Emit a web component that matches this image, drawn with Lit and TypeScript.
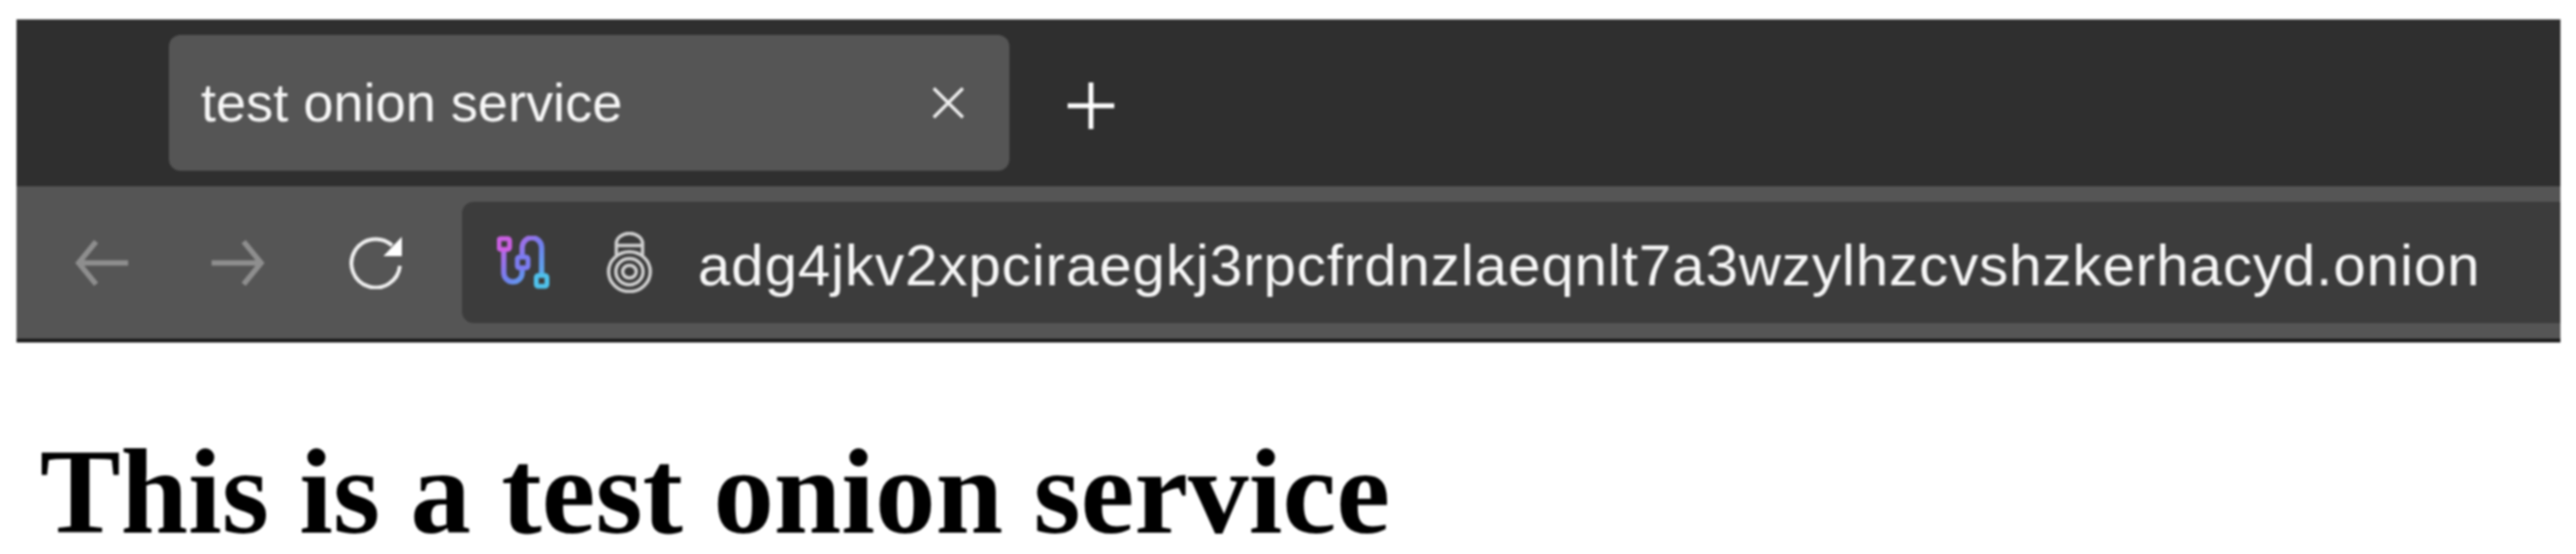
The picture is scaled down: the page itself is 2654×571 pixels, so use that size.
import { LitElement, html, css } from "lit";
import { customElement } from "lit/decorators.js";

@customElement("app-root")
export class AppRoot extends LitElement {
  static styles = css`
    :host { display: block; background: #fff; font-family: "Liberation Sans", Arial, sans-serif; }
    .frame { filter: blur(0.8px); padding: 20px 16px 0 17px; }
    .titlebar { height: 172px; box-sizing: border-box; background: #2f2f2f; padding: 16px 0 0 157px; display: flex; gap: 60px; align-items: flex-start; }
    .tab { width: 866px; height: 140px; box-sizing: border-box; background: #555; border-radius: 12px; display: flex; align-items: center; justify-content: space-between; padding: 0 47px 0 33px; color: #f6f6f6; font-size: 55.8px; }
    .tab span { margin-bottom: 2px; }
    .tab svg { flex: none; }
    .plus { margin-top: 49px; flex: none; }
    .toolbar { height: 157px; box-sizing: border-box; background: #555; display: flex; align-items: center; padding-left: 60px; }
    .nav { flex: none; }
    .fwd { margin-left: 86px; }
    .reload { margin-left: 85px; }
    .address { margin-left: 62px; flex: 1; height: 125px; background: #3c3c3c; border-radius: 12px 0 0 12px; display: flex; align-items: center; padding-left: 36px; color: #f6f6f6; font-size: 60px; letter-spacing: 0.95px; white-space: nowrap; }
    .lock { margin-left: 58px; flex: none; }
    .url { margin-left: 47px; margin-top: 5px; }
    .edge { height: 4px; background: #1c1c1c; }
    h1 { margin: 92px 0 0 24px; font-family: "Liberation Serif", "Times New Roman", serif; font-weight: 700; font-size: 124.9px; line-height: 124px; color: #000; white-space: nowrap; }
  `;

  render() {
    return html`
      <div class="frame">
        <div class="titlebar">
          <div class="tab">
            <span>test onion service</span>
            <svg width="32" height="32" viewBox="0 0 32 32" fill="none" stroke="#eee" stroke-width="3.4"><path d="M1 1 31 31M31 1 1 31"/></svg>
          </div>
          <svg class="plus" width="48" height="48" viewBox="0 0 48 48" fill="none" stroke="#fff" stroke-width="5"><path d="M0 24H48M24 0V48"/></svg>
        </div>
        <div class="toolbar">
          <svg class="nav" width="55" height="48" viewBox="0 0 55 48" fill="none" stroke="#8e8e8e" stroke-width="5.5"><path d="M55 24H4M22 2 4 24 22 46"/></svg>
          <svg class="nav fwd" width="55" height="48" viewBox="0 0 55 48" fill="none" stroke="#8e8e8e" stroke-width="5.5"><path d="M0 24H51M33 2 51 24 33 46"/></svg>
          <svg class="nav reload" width="56" height="54" viewBox="0 0 56 54"><path d="M46 9A25 25 0 1 0 54 30" fill="none" stroke="#eee" stroke-width="4"/><path d="M56 0V20H37Z" fill="#fff"/></svg>
          <div class="address">
            <svg class="nav" width="55" height="55" viewBox="0 0 55 55" fill="none">
              <defs><linearGradient id="g" gradientUnits="userSpaceOnUse" x1="5" y1="4" x2="50" y2="50"><stop offset="0" stop-color="#cc60e4"/><stop offset=".5" stop-color="#7080ee"/><stop offset="1" stop-color="#4fbde9"/></linearGradient></defs>
              <path d="M7 14V38A9.500 9.500 0 0 0 26 38V12A10 10 0 0 1 46 12V42" stroke="url(#g)" stroke-width="5.500"/>
              <rect x="2" y="3" width="11" height="11" rx="2" fill="#3c3c3c" stroke="#cc60e4" stroke-width="5"/>
              <rect x="21" y="22" width="11" height="11" rx="2" fill="#3c3c3c" stroke="#7c7cf0" stroke-width="5"/>
              <rect x="40.500" y="41" width="11" height="11" rx="2" fill="#3c3c3c" stroke="#4fc0ea" stroke-width="5"/>
            </svg>
            <svg class="lock" width="47" height="63" viewBox="0 0 47 63" fill="none" stroke="#d0d0d0" stroke-width="3.500">
              <path d="M10 24V12A13.500 10.500 0 0 1 37 12V24"/>
              <path d="M10 14H37"/>
              <ellipse cx="23.500" cy="41" rx="21.500" ry="20.500"/>
              <ellipse cx="23.500" cy="41" rx="14" ry="13.500"/>
              <ellipse cx="23.500" cy="41" rx="7" ry="6.500"/>
            </svg>
            <span class="url">adg4jkv2xpciraegkj3rpcfrdnzlaeqnlt7a3wzylhzcvshzkerhacyd.onion</span>
          </div>
        </div>
        <div class="edge"></div>
        <h1>This is a test onion service</h1>
      </div>
    `;
  }
}
